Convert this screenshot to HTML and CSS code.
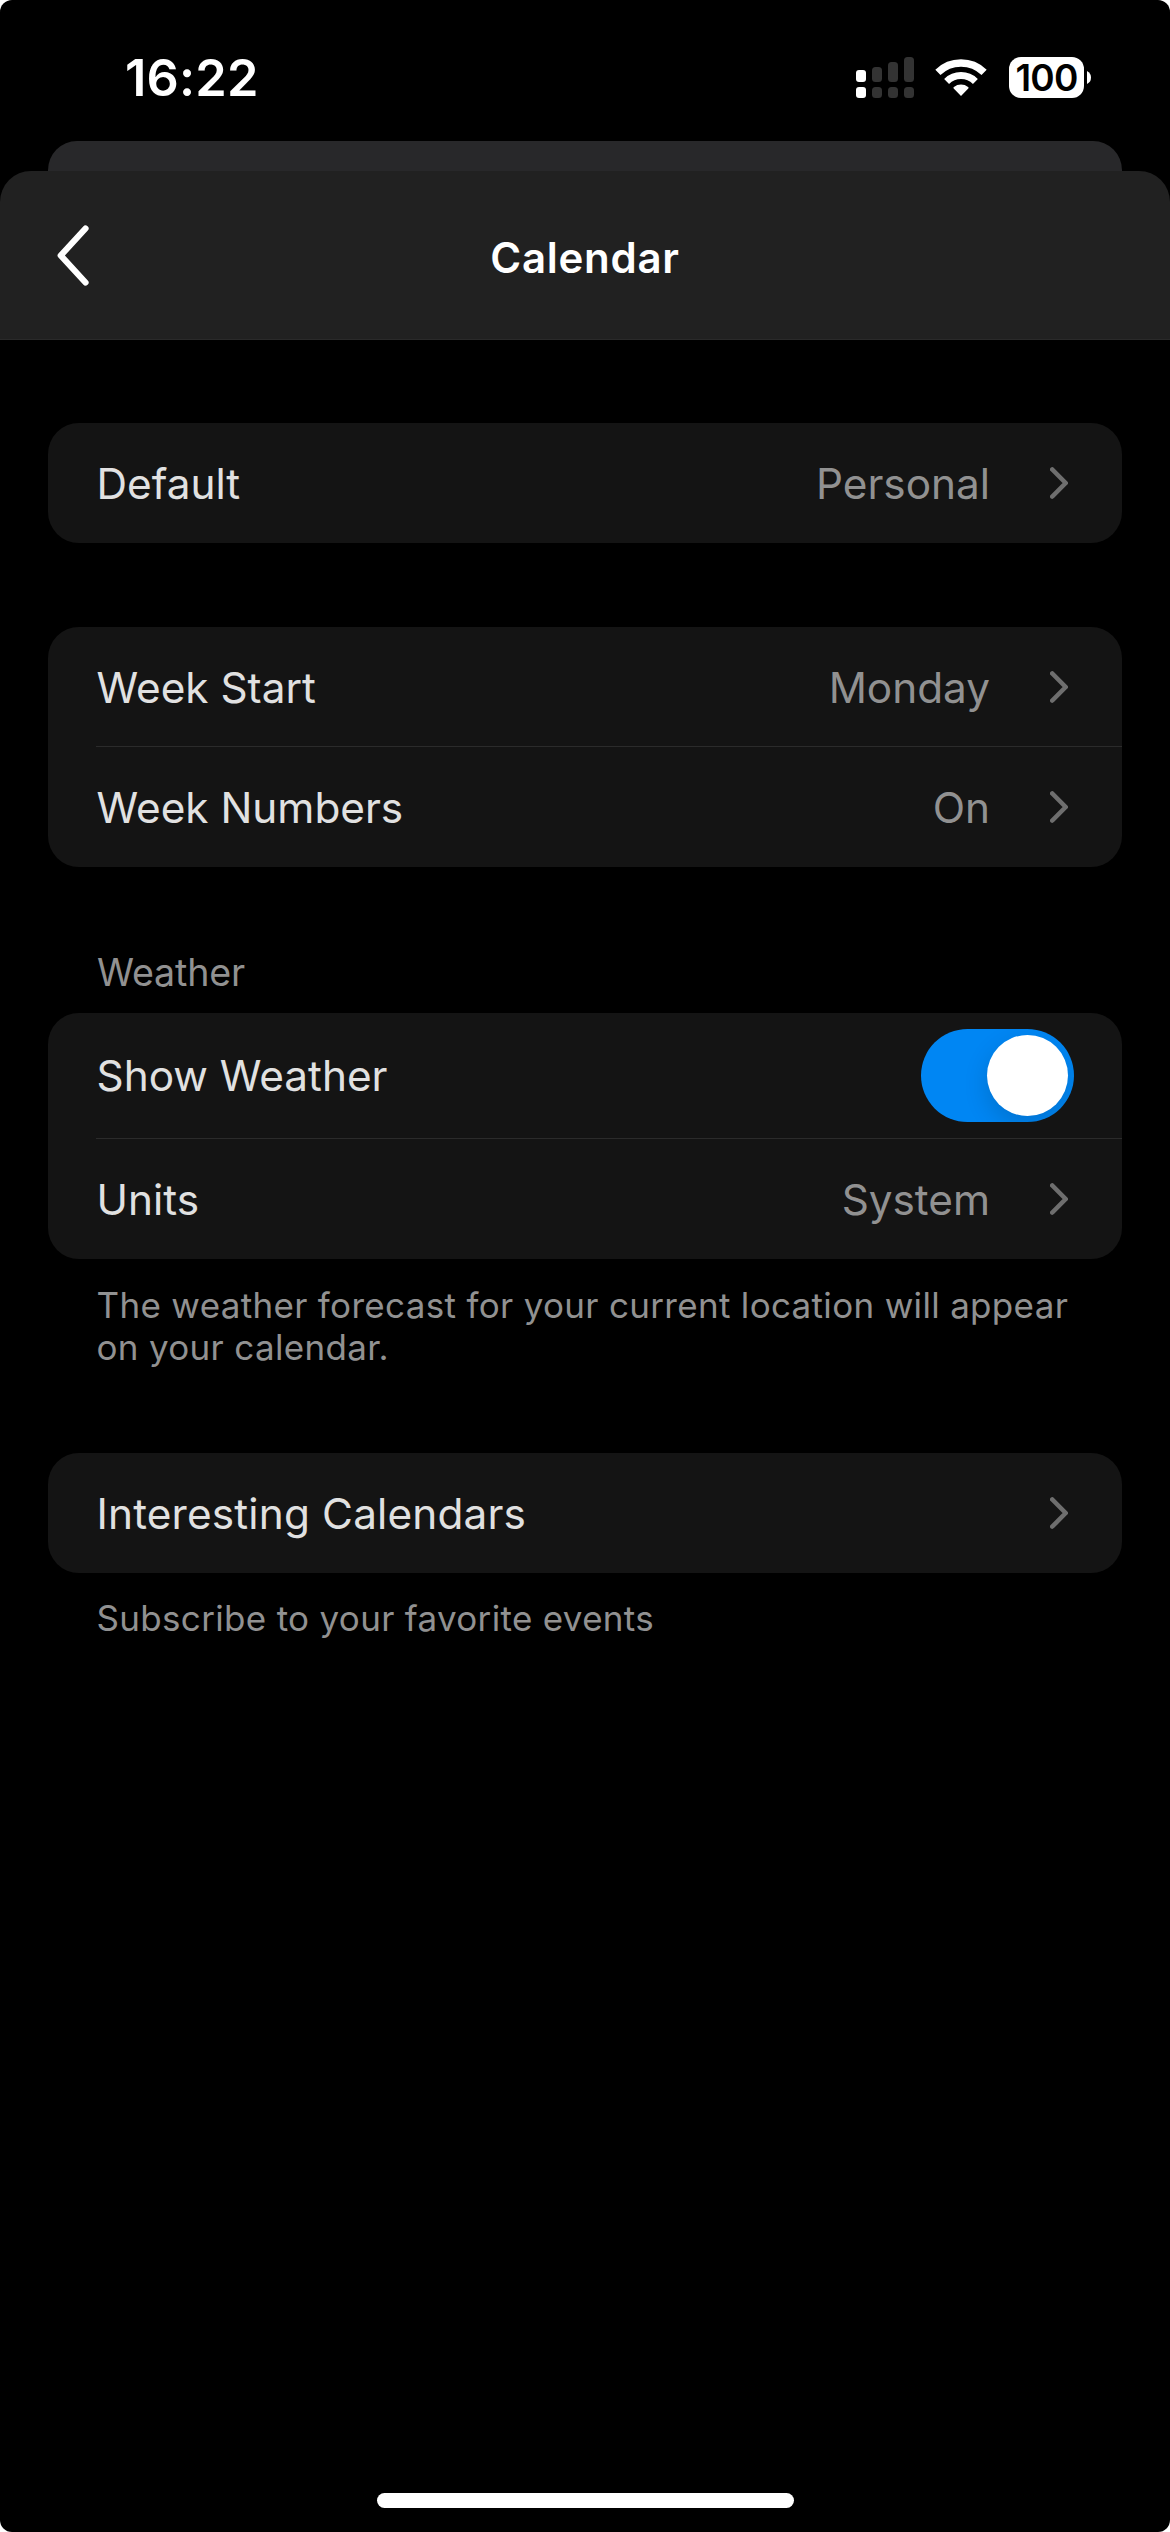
FILE: index.html
```html
<!DOCTYPE html>
<html lang="en">
<head>
<meta charset="utf-8">
<title>Calendar</title>
<link rel="stylesheet" href="styles.css">
</head>
<body>
<div class="screen">
  <div class="status">
    <span class="time">16:22</span>
    <div class="status-icons">
      <svg class="cellular" width="58" height="41" viewBox="0 0 58 41" fill="#333">
        <rect x="0" y="13" width="10" height="12" rx="3" fill="#fff"/>
        <rect x="16" y="10" width="10" height="15" rx="3.5"/>
        <rect x="32" y="5" width="10" height="20" rx="3.5"/>
        <rect x="48" y="0" width="10" height="25" rx="3.5"/>
        <rect x="0" y="30" width="10" height="11" rx="3" fill="#fff"/>
        <rect x="16" y="30" width="10" height="11" rx="3.5"/>
        <rect x="32" y="30" width="10" height="11" rx="3.5"/>
        <rect x="48" y="30" width="10" height="11" rx="3.5"/>
      </svg>
      <svg class="wifi" width="52" height="41" viewBox="0 0 52 41" fill="none" stroke="#fff">
        <path d="M2.9 15.4A33.2 33.2 0 0 1 49.1 15.4" stroke-width="7.4"/>
        <path d="M11.6 24.4A20.7 20.7 0 0 1 40.4 24.4" stroke-width="7"/>
        <path d="M26 39 18.7 31.6Q17.900 30.600 18.900 29.900A11.800 11.800 0 0 1 33.100 29.900Q34.100 30.600 33.300 31.600Z" fill="#fff" stroke="none"/>
      </svg>
      <div class="battery">
        <span class="battery-level">100</span>
        <svg width="4" height="13" viewBox="0 0 4 13"><path d="M0 0Q4 2 4 6.500T0 13Z" fill="#fff"/></svg>
      </div>
    </div>
  </div>
  <div class="peek"></div>
  <div class="sheet">
    <header class="bar">
      <svg class="back" width="32" height="62" viewBox="0 0 32 62" fill="none" stroke="#fff" stroke-width="6.200" stroke-linecap="round" stroke-linejoin="round"><path d="M28.500 4.500 3.700 31.500 28.500 58.500"/></svg>
      <h1>Calendar</h1>
    </header>
    <main>
      <section class="card">
        <div class="row"><span class="label">Default</span><span class="value">Personal</span><svg class="chevron" viewBox="0 0 18 32"><path d="M2.300 2.500 15.700 16 2.300 29.500"/></svg></div>
      </section>

      <section class="card group">
        <div class="row"><span class="label">Week Start</span><span class="value">Monday</span><svg class="chevron" viewBox="0 0 18 32"><path d="M2.300 2.500 15.700 16 2.300 29.500"/></svg></div>
        <hr>
        <div class="row"><span class="label">Week Numbers</span><span class="value">On</span><svg class="chevron" viewBox="0 0 18 32"><path d="M2.300 2.500 15.700 16 2.300 29.500"/></svg></div>
      </section>

      <h2>Weather</h2>
      <section class="card">
        <div class="row row-toggle"><span class="label">Show Weather</span><span class="toggle"><span class="knob"></span></span></div>
        <hr>
        <div class="row"><span class="label">Units</span><span class="value">System</span><svg class="chevron" viewBox="0 0 18 32"><path d="M2.300 2.500 15.700 16 2.300 29.500"/></svg></div>
      </section>
      <p>The weather forecast for your current location will appear<br>on your calendar.</p>

      <section class="card group">
        <div class="row"><span class="label wide">Interesting Calendars</span><svg class="chevron" viewBox="0 0 18 32"><path d="M2.300 2.500 15.700 16 2.300 29.500"/></svg></div>
      </section>
      <p>Subscribe to your favorite events</p>
    </main>
    <div class="home"></div>
  </div>
</div>
</body>
</html>
```
FILE: styles.css
```css
* { box-sizing: border-box; }

body {
  margin: 0;
  background: #fff;
  font-family: Inter, "Liberation Sans", sans-serif;
}

svg { display: block; flex: none; }

.screen {
  display: flex;
  flex-direction: column;
  width: 1170px;
  height: 2532px;
  overflow: hidden;
  border-radius: 12px;
  background: #000;
}

/* Status bar */
.status {
  display: flex;
  align-items: center;
  justify-content: space-between;
  height: 141px;
  padding: 14px 79px 0 125px;
  color: #fff;
}

.time {
  font-size: 50.5px;
  font-weight: 600;
  letter-spacing: 0.2px;
}

.status-icons {
  display: flex;
  align-items: center;
}

.wifi { margin-left: 21px; }

.battery {
  display: flex;
  align-items: center;
  gap: 3px;
  margin-left: 22px;
}

.battery-level {
  width: 75px;
  height: 41px;
  border-radius: 12px;
  background: #fff;
  color: #000;
  font-size: 37px;
  font-weight: 600;
  line-height: 41px;
  letter-spacing: -0.8px;
  text-align: center;
}

/* Stacked sheets */
.peek {
  height: 30px;
  margin: 0 48px;
  border-radius: 29px 29px 0 0;
  background: #28282a;
}

.sheet {
  display: flex;
  flex: 1;
  flex-direction: column;
}

.bar {
  display: grid;
  grid-template-columns: 32px 1fr 32px;
  align-items: center;
  height: 169px;
  padding: 0 57px;
  border-bottom: 1px solid #2a2a2a;
  border-radius: 31px 31px 0 0;
  background: #212121;
}

h1 {
  margin: 4px 0 0;
  color: #fff;
  font-size: 42px;
  font-weight: 600;
  letter-spacing: 0.73px;
  text-align: center;
}

/* Settings list */
main {
  flex: 1;
  padding: 83px 48px 0;
}

.card {
  overflow: hidden;
  border-radius: 31px;
  background: #141414;
}

.group { margin-top: 84px; }

.row {
  display: flex;
  align-items: center;
  height: 120px;
  padding: 0 54px 0 48.5px;
  font-size: 42.3px;
}

.row-toggle {
  height: 126px;
  padding-right: 48px;
}

hr {
  height: 1px;
  margin: -1px 0 0 48px;
  border: 0;
  background: #2b2b2b;
}

.label {
  flex: 1;
  padding-top: 1px;
  color: #e1e1e1;
}

.row-toggle .label { padding: 0 0 1px; }

.wide { letter-spacing: 0.17px; }

.value {
  margin-right: 60px;
  padding-top: 1px;
  color: #919191;
}

.chevron {
  width: 18px;
  height: 32px;
  fill: none;
  stroke: #6e6e6e;
  stroke-width: 4.6px;
  stroke-linecap: round;
  stroke-linejoin: round;
}

.toggle {
  display: flex;
  justify-content: flex-end;
  width: 153px;
  height: 93px;
  margin-bottom: 1px;
  padding: 6px;
  overflow: hidden;
  border-radius: 47px;
  background: #0086f3;
}

.knob {
  width: 81px;
  height: 81px;
  border-radius: 50%;
  background: #fff;
  box-shadow: 0 9px 24px rgba(0, 0, 0, 0.15);
}

h2 {
  margin: 83px 0 17px 49px;
  color: #919191;
  font-size: 37.6px;
  font-weight: 400;
  line-height: 46px;
  letter-spacing: -0.15px;
}

p {
  margin: 25px 0 0 48.5px;
  color: #919191;
  font-size: 35px;
  line-height: 42px;
  letter-spacing: 0.32px;
  white-space: nowrap;
}

p + .group { margin-top: 85px; }

.group + p { margin-top: 24px; }

.home {
  align-self: center;
  width: 417px;
  height: 15px;
  margin-bottom: 24px;
  border-radius: 8px;
  background: #fff;
}
```
